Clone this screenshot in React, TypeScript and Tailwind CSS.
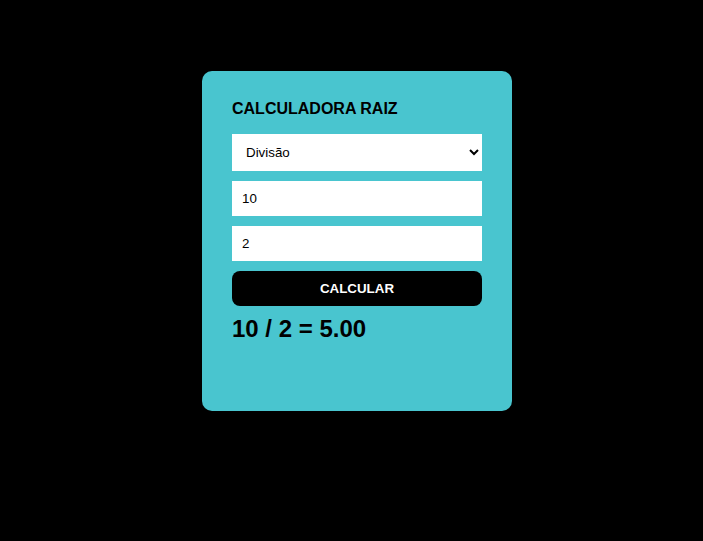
import { useState } from 'react'

export default function App() {
  const [op, setOp] = useState('div')
  const [a, setA] = useState('10')
  const [b, setB] = useState('2')
  const [result, setResult] = useState('10 / 2 = 5.00')

  const calcular = () => {
    const x = parseFloat(a)
    const y = parseFloat(b)
    const sym: Record<string, string> = { soma: '+', sub: '-', mult: '*', div: '/' }
    let r = 0
    if (op === 'soma') r = x + y
    if (op === 'sub') r = x - y
    if (op === 'mult') r = x * y
    if (op === 'div') r = x / y
    setResult(`${a} ${sym[op]} ${b} = ${r.toFixed(2)}`)
  }

  return (
    <div className="min-h-[541px] w-full bg-black pt-[71px] font-['Liberation_Sans',Arial,sans-serif]">
      <div className="ml-[202px] flex h-[340px] w-[310px] flex-col rounded-[10px] bg-[#49c5cf] px-[30px] pt-[29px]">
        <h2 className="mb-4 text-[16px] font-bold leading-[18px] text-black">CALCULADORA RAIZ</h2>
        <select
          value={op}
          onChange={(e) => setOp(e.target.value)}
          className="mb-[10px] h-[37px] w-[250px] border-0 bg-white px-[10px] text-[13.33px] text-black outline-none"
        >
          <option value="soma">Soma</option>
          <option value="sub">Subtração</option>
          <option value="mult">Multiplicação</option>
          <option value="div">Divisão</option>
        </select>
        <input
          value={a}
          onChange={(e) => setA(e.target.value)}
          className="mb-[10px] h-[35px] w-[250px] border-0 bg-white px-[10px] text-[13.33px] text-black outline-none"
        />
        <input
          value={b}
          onChange={(e) => setB(e.target.value)}
          className="mb-[10px] h-[35px] w-[250px] border-0 bg-white px-[10px] text-[13.33px] text-black outline-none"
        />
        <button
          onClick={calcular}
          className="h-[35px] w-[250px] rounded-[8px] bg-black text-[13.33px] font-bold text-white"
        >
          CALCULAR
        </button>
        <h2 className="mt-[9px] text-[24px] font-bold leading-[28px] text-black">{result}</h2>
      </div>
    </div>
  )
}
